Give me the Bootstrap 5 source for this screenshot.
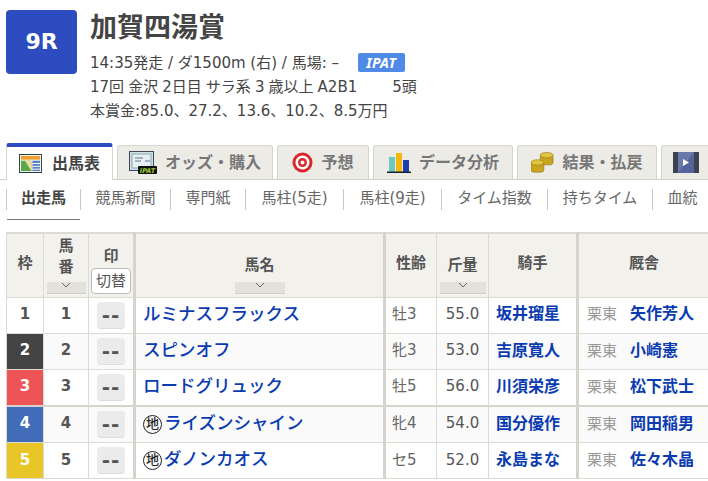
<!DOCTYPE html>
<html lang="ja">
<head>
<meta charset="utf-8">
<title>加賀四湯賞</title>
<link href="https://cdn.jsdelivr.net/npm/bootstrap@5.3.0/dist/css/bootstrap.min.css" rel="stylesheet">
<style>
html,body{width:708px;height:481px;overflow:hidden;background:#fff}
body{font-family:"DejaVu Sans","Noto Sans CJK JP",sans-serif;color:#444;font-size:15px}
.rhead{padding:10px 0 0 6px;gap:13px;height:143px}
.rnum{width:71px;height:64px;background:#2c4cc0;border-radius:4px;color:#fff;font-size:22px;font-weight:700;line-height:1}
.rtitle{font-size:27px;font-weight:700;line-height:36px;margin:0 0 5px;color:#444}
.rline{font-size:15px;line-height:24px;color:#444;white-space:nowrap}
.rline2{word-spacing:-.7px}
.ipat{display:inline-block;background:#4f8ae6;color:#fff;font:italic 700 14px/19px "Noto Sans",sans-serif;width:47px;height:19px;text-align:center;border-radius:2px;margin-left:14px;vertical-align:0;letter-spacing:.3px}
.gaphead{margin-left:35px}
.tabbar{height:37px;border-bottom:1px solid #d0cfc8;gap:4px;padding-left:6px;flex-wrap:nowrap;align-items:flex-end}
.tabx{height:34px;background:#ecebe6;border:1px solid #d6d5ce;border-bottom:0;border-radius:3px 3px 0 0;color:#777;font-weight:700;font-size:16px;gap:8px;flex:none;white-space:nowrap}
.tabx svg{flex:none}
.tabon{height:37px;margin-bottom:-1px;background:#fff;border-top:4px solid #2c4cc0;color:#444;width:107px;gap:10px}
.subnav{height:40px;padding:9px 0 0 6px;white-space:nowrap;flex-wrap:nowrap}
.subi{height:21px;line-height:18px;border-left:1px solid #c9c8c0;color:#666;font-size:15px;text-align:center;flex:none;position:relative}
.subon{color:#444;font-weight:700}
.subon::after{content:"";position:absolute;left:0;right:0;top:30px;height:1px;background:#777}
.twrap{margin:12px 0 0 6px;width:720px}
table.rtable{table-layout:fixed;width:720px;border-collapse:collapse;margin:0;border-top:2px solid #dcdbd3;border-left:1px solid #dcdbd3}
.rtable th,.rtable td{border:1px solid #dcdbd3;padding:0;text-align:center;vertical-align:middle;color:#555}
.rtable thead th{background:#f2f1ec;font-weight:700;font-size:15px;height:64px;line-height:21px;color:#555}
.rtable thead th.midh{padding-bottom:3px}
.rtable tbody tr{height:36.4px}
.rtable tbody td{padding-bottom:2px}
.rtable tbody td.markc{padding-bottom:0}
.rtable tbody tr:nth-child(even) td{background:#fafafa}
.rtable tbody tr:nth-child(3) td{border-bottom-width:2px;border-bottom-color:#d5d4cc}
.bl3{border-left:3px solid #d5d4cc !important}
.wk{font-weight:700;font-size:15px}
.w2{background:#444 !important;color:#fff !important}
.w3{background:#ee5356 !important;color:#fff !important}
.w4{background:#436cb8 !important;color:#fff !important}
.w5{background:#e8c628 !important;color:#fff !important}
.num{font-weight:700;font-size:15px}
.mk{display:inline-block;width:28px;height:27px;background:#ebebeb;border-radius:4px;border-bottom:1px solid #ddd;font-weight:700;font-size:20px;line-height:26px;color:#555;letter-spacing:1px}
.sortb{display:block;background:#e2e1dc;border-bottom:1px solid #cfcec8;height:12px;margin:4px auto 0;line-height:0}
.inh{display:block;margin-top:9px}
.kire{display:inline-block;width:40px;height:26px;border:1px solid #bbb;border-radius:4px;background:#fff;font-size:15px;font-weight:400;line-height:24px;color:#555;margin-top:1px}
.rtable tbody td.hname{text-align:left;padding:0 0 3px 7px;font-size:17.5px;white-space:nowrap}
.hname a{color:#0a3bb0;text-decoration:none;font-weight:500}
.rtable tbody td.sa{font-size:15px;color:#666;text-align:left;padding-left:6px}
.kg{font-size:15px}
.lnk{color:#0a3bb0;font-weight:700;font-size:16px;text-decoration:none}
.rtable tbody td.jk{text-align:left;padding-left:7px}
.rtable tbody td.tr{text-align:left;padding-left:8px;white-space:nowrap}
.sm{color:#999;font-size:15px;margin-right:13px}
.ji{display:inline-block;width:19px;height:19px;border:1.5px solid #222;border-radius:50%;font-size:13px;line-height:16px;text-align:center;color:#222;vertical-align:1px;font-weight:500;margin-right:2px}
.sorth{padding-top:19px !important}
.sorth .sortb{margin-top:6px}
</style>
</head>
<body>
<div class="d-flex rhead">
  <div class="rnum d-flex align-items-center justify-content-center">9R</div>
  <div>
    <h1 class="rtitle">加賀四湯賞</h1>
    <div class="rline">14:35発走 / ダ1500m (右) / 馬場: – <span class="ipat">IPAT</span></div>
    <div class="rline rline2">17回 金沢 2日目 サラ系 3 歳以上 A2B1<span class="gaphead">5頭</span></div>
    <div class="rline">本賞金:85.0、27.2、13.6、10.2、8.5万円</div>
  </div>
</div>

<div class="d-flex tabbar">
  <div class="tabx tabon d-flex align-items-center justify-content-center">
    <svg width="23" height="19" viewBox="0 0 24 20"><rect x=".5" y=".5" width="23" height="19" fill="#fff" stroke="#233"/><rect x="2" y="2" width="20" height="4" fill="#f0a030"/><rect x="2" y="7" width="11" height="11" fill="#5aa845"/><path d="M13 7H6l7 11z" fill="#f4d9a0"/><rect x="14" y="7" width="8" height="11" fill="#5b83c4"/><path d="M14 10h8M14 13h8M14 16h8" stroke="#fff"/></svg>
    <span>出馬表</span>
  </div>
  <div class="tabx d-flex align-items-center justify-content-center" style="width:156px">
    <svg width="28" height="24" viewBox="0 0 28 24"><rect x=".5" y=".5" width="24" height="19" fill="#cfe0ea" stroke="#445"/><rect x="3" y="3" width="19" height="14" fill="#e6eff4" stroke="#8aa"/><path d="M6 7h8M6 10h6M16 10h5" stroke="#678"/><rect x="9" y="15" width="19" height="8" rx="1" fill="#111"/><text x="18.5" y="22" font-size="6.5" font-weight="700" font-style="italic" text-anchor="middle" fill="#9c3">IPAT</text></svg>
    <span>オッズ・購入</span>
  </div>
  <div class="tabx d-flex align-items-center justify-content-center" style="width:92px">
    <svg width="21" height="21" viewBox="0 0 21 21"><circle cx="10.5" cy="10.5" r="10" fill="#d9262b"/><circle cx="10.5" cy="10.5" r="7" fill="#fff"/><circle cx="10.5" cy="10.5" r="4.5" fill="#d9262b"/><circle cx="10.5" cy="10.5" r="2" fill="#fff"/></svg>
    <span>予想</span>
  </div>
  <div class="tabx d-flex align-items-center justify-content-center" style="width:140px">
    <svg width="24" height="21" viewBox="0 0 24 21"><rect x="2" y="5" width="6" height="15" fill="#6cc9bf"/><rect x="9" y="1" width="6" height="19" fill="#f5b50f"/><rect x="16" y="8" width="6" height="12" fill="#1c3fae"/><rect x="0" y="19.500" width="24" height="1.5" fill="#123"/></svg>
    <span>データ分析</span>
  </div>
  <div class="tabx d-flex align-items-center justify-content-center" style="width:140px">
    <svg width="23" height="23" viewBox="0 0 25 23"><g fill="#c9a520" stroke="#8a7010" stroke-width=".6"><rect x="10" y="3" width="14" height="11" rx="3"/><ellipse cx="17" cy="3.5" rx="7" ry="3" fill="#e2c441"/><rect x="0" y="11" width="14" height="11" rx="3"/><ellipse cx="7" cy="11.500" rx="7" ry="3" fill="#e2c441"/></g></svg>
    <span>結果・払戻</span>
  </div>
  <div class="tabx d-flex align-items-center" style="width:60px;padding-left:11px">
    <svg width="26" height="21" viewBox="0 0 26 21"><rect width="26" height="21" fill="#3d4250"/><rect x="5" y="0" width="16" height="21" fill="#6a78ac"/><path d="M21 0L5 21h16z" fill="#55639a"/><path d="M10 7l6 3.5-6 3.500z" fill="#fff"/></svg>
  </div>
</div>

<div class="d-flex subnav">
  <div class="subi subon" style="width:74px">出走馬</div>
  <div class="subi" style="width:90px">競馬新聞</div>
  <div class="subi" style="width:75px">専門紙</div>
  <div class="subi" style="width:98px">馬柱(5走)</div>
  <div class="subi" style="width:98px">馬柱(9走)</div>
  <div class="subi" style="width:106px">タイム指数</div>
  <div class="subi" style="width:105px">持ちタイム</div>
  <div class="subi" style="width:60px">血統</div>
</div>

<div class="twrap">
<table class="table rtable">
  <colgroup><col style="width:37px"><col style="width:45px"><col style="width:46px"><col style="width:250px"><col style="width:52px"><col style="width:52px"><col style="width:89px"><col style="width:149px"></colgroup>
  <thead><tr>
    <th class="midh">枠</th>
    <th>馬<br>番<span class="sortb" style="width:39px"><svg width="12" height="7" viewBox="0 0 12 7"><path d="M2 1l4 4 4-4" fill="none" stroke="#666"/></svg></span></th>
    <th><span class="inh">印</span><span class="kire">切替</span></th>
    <th class="bl3 sorth">馬名<span class="sortb" style="width:50px"><svg width="12" height="7" viewBox="0 0 12 7"><path d="M2 1l4 4 4-4" fill="none" stroke="#666"/></svg></span></th>
    <th class="bl3 midh">性齢</th>
    <th class="sorth">斤量<span class="sortb" style="width:46px"><svg width="12" height="7" viewBox="0 0 12 7"><path d="M2 1l4 4 4-4" fill="none" stroke="#666"/></svg></span></th>
    <th class="midh">騎手</th>
    <th class="bl3 midh" style="text-align:left;padding-left:50px">厩舎</th>
  </tr></thead>
  <tbody>
    <tr><td class="wk">1</td><td class="num">1</td><td class="markc"><span class="mk">--</span></td><td class="hname bl3"><a href="#">ルミナスフラックス</a></td><td class="sa bl3">牡3</td><td class="kg">55.0</td><td class="jk"><a class="lnk" href="#">坂井瑠星</a></td><td class="tr bl3"><span class="sm">栗東</span><a class="lnk" href="#">矢作芳人</a></td></tr>
    <tr><td class="wk w2">2</td><td class="num">2</td><td class="markc"><span class="mk">--</span></td><td class="hname bl3"><a href="#">スピンオフ</a></td><td class="sa bl3">牝3</td><td class="kg">53.0</td><td class="jk"><a class="lnk" href="#">吉原寛人</a></td><td class="tr bl3"><span class="sm">栗東</span><a class="lnk" href="#">小崎憲</a></td></tr>
    <tr><td class="wk w3">3</td><td class="num">3</td><td class="markc"><span class="mk">--</span></td><td class="hname bl3"><a href="#">ロードグリュック</a></td><td class="sa bl3">牡5</td><td class="kg">56.0</td><td class="jk"><a class="lnk" href="#">川須栄彦</a></td><td class="tr bl3"><span class="sm">栗東</span><a class="lnk" href="#">松下武士</a></td></tr>
    <tr><td class="wk w4">4</td><td class="num">4</td><td class="markc"><span class="mk">--</span></td><td class="hname bl3"><span class="ji">地</span><a href="#">ライズンシャイン</a></td><td class="sa bl3">牝4</td><td class="kg">54.0</td><td class="jk"><a class="lnk" href="#">国分優作</a></td><td class="tr bl3"><span class="sm">栗東</span><a class="lnk" href="#">岡田稲男</a></td></tr>
    <tr><td class="wk w5">5</td><td class="num">5</td><td class="markc"><span class="mk">--</span></td><td class="hname bl3"><span class="ji">地</span><a href="#">ダノンカオス</a></td><td class="sa bl3">セ5</td><td class="kg">52.0</td><td class="jk"><a class="lnk" href="#">永島まな</a></td><td class="tr bl3"><span class="sm">栗東</span><a class="lnk" href="#">佐々木晶</a></td></tr>
  </tbody>
</table>
</div>
<script src="https://cdn.jsdelivr.net/npm/bootstrap@5.3.0/dist/js/bootstrap.bundle.min.js"></script>
</body>
</html>
